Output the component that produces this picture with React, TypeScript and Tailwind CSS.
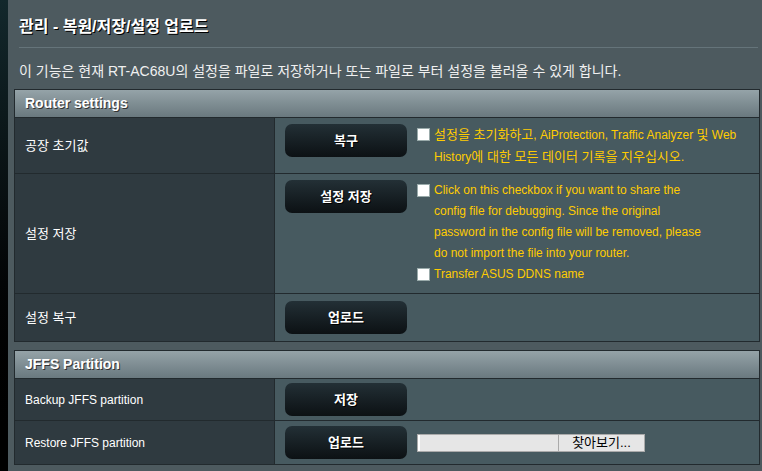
import React from "react";

const FONT = { fontFamily: '"Liberation Sans", Arial, "Noto Sans CJK KR", sans-serif' };

function Btn({ label }: { label: string }) {
  return (
    <div className="w-[122px] h-[33px] rounded-[7px] bg-gradient-to-b from-[#233036] to-[#0c1114] flex items-center justify-center text-white text-[13px] font-bold [text-shadow:1px_1px_0_#000]">
      {label}
    </div>
  );
}

function Check() {
  return <span className="inline-block w-[13px] h-[13px] bg-white border border-[#9aa] shrink-0 mt-[4px]" />;
}

function Header({ title }: { title: string }) {
  return (
    <div className="h-[28px] bg-gradient-to-b from-[#95a3a8] to-[#6a797f] flex items-center pl-[10px] text-white text-[14px] font-bold border-b border-[#222a2e] [text-shadow:1px_1px_0_#333]">
      {title}
    </div>
  );
}

function Row({ label, h, children, last, small }: { label: string; h: string; children: React.ReactNode; last?: boolean; small?: boolean }) {
  return (
    <div className={`flex ${h} ${last ? "" : "border-b border-[#222a2e]"}`}>
      <div className={`w-[260px] bg-[#2f3a40] border-r border-[#222a2e] flex items-center pl-[10px] ${small ? "text-[12px]" : "text-[13px]"} text-white`}>
        {label}
      </div>
      <div className="flex-1 bg-[#475a60] pl-[10px] pr-[6px]">{children}</div>
    </div>
  );
}

const K = ({ children }: { children: React.ReactNode }) => <span className="text-[13px]">{children}</span>;

export default function App() {
  return (
    <div className="flex w-[762px] h-[471px] overflow-hidden" style={FONT}>
      <div className="w-[8px] bg-gradient-to-b from-[#12282c] via-[#060a0c] to-[#000]" />
      <div className="flex-1 bg-[#4d5a5f] flex flex-col">
        <div className="pl-[11px] pt-[15px] h-[47px] text-white text-[16px] font-bold [text-shadow:1px_1px_0_#000]">
          관리 - 복원/저장/설정 업로드
        </div>
        <div className="ml-[11px] mr-[4px] h-[1px] bg-[#65747a]" />
        <div className="pl-[11px] pt-[13px] h-[41px] text-[14px] text-[#f0f0f0]">
          이 기능은 현재 RT-AC68U의 설정을 파일로 저장하거나 또는 파일로 부터 설정을 불러올 수 있게 합니다.
        </div>
        <div className="ml-[6px] mr-[2px] border border-[#222a2e]">
          <Header title="Router settings" />
          <Row label="공장 초기값" h="h-[56px]">
            <div className="flex items-start pt-[6px] gap-[10px]">
              <Btn label="복구" />
              <div className="flex gap-[4px]">
                <Check />
                <div className="text-[12px] leading-[21px] text-[#ffcc00]">
                  <K>설정을 초기화하고</K>, AiProtection, Traffic Analyzer <K>및</K> Web
                  <br />
                  History<K>에 대한 모든 데이터 기록을 지우십시오.</K>
                </div>
              </div>
            </div>
          </Row>
          <Row label="설정 저장" h="h-[120px]">
            <div className="flex items-start pt-[6px] gap-[10px]">
              <Btn label="설정 저장" />
              <div className="flex flex-col">
                <div className="flex gap-[4px]">
                  <Check />
                  <div className="text-[12px] leading-[21px] text-[#ffcc00]">
                    Click on this checkbox if you want to share the
                    <br />
                    config file for debugging. Since the original
                    <br />
                    password in the config file will be removed, please
                    <br />
                    do not import the file into your router.
                  </div>
                </div>
                <div className="flex gap-[4px]">
                  <Check />
                  <div className="text-[12px] leading-[21px] text-[#ffcc00]">Transfer ASUS DDNS name</div>
                </div>
              </div>
            </div>
          </Row>
          <Row label="설정 복구" h="h-[47px]" last>
            <div className="pt-[7px]">
              <Btn label="업로드" />
            </div>
          </Row>
        </div>
        <div className="h-[8px]" />
        <div className="ml-[6px] mr-[2px] border border-[#222a2e]">
          <Header title="JFFS Partition" />
          <Row label="Backup JFFS partition" h="h-[42px]" small>
            <div className="pt-[4px]">
              <Btn label="저장" />
            </div>
          </Row>
          <Row label="Restore JFFS partition" h="h-[43px]" last small>
            <div className="flex items-center pt-[5px] gap-[10px]">
              <Btn label="업로드" />
              <div className="flex h-[18px] border border-[#aaa]">
                <div className="w-[140px] bg-[#e6e6e6] border-l-2 border-[#fff]" />
                <div className="w-[86px] bg-[#e6e6e6] border-l border-[#aaa] text-[13px] text-black flex items-center justify-center leading-none">
                  찾아보기...
                </div>
              </div>
            </div>
          </Row>
        </div>
      </div>
    </div>
  );
}
